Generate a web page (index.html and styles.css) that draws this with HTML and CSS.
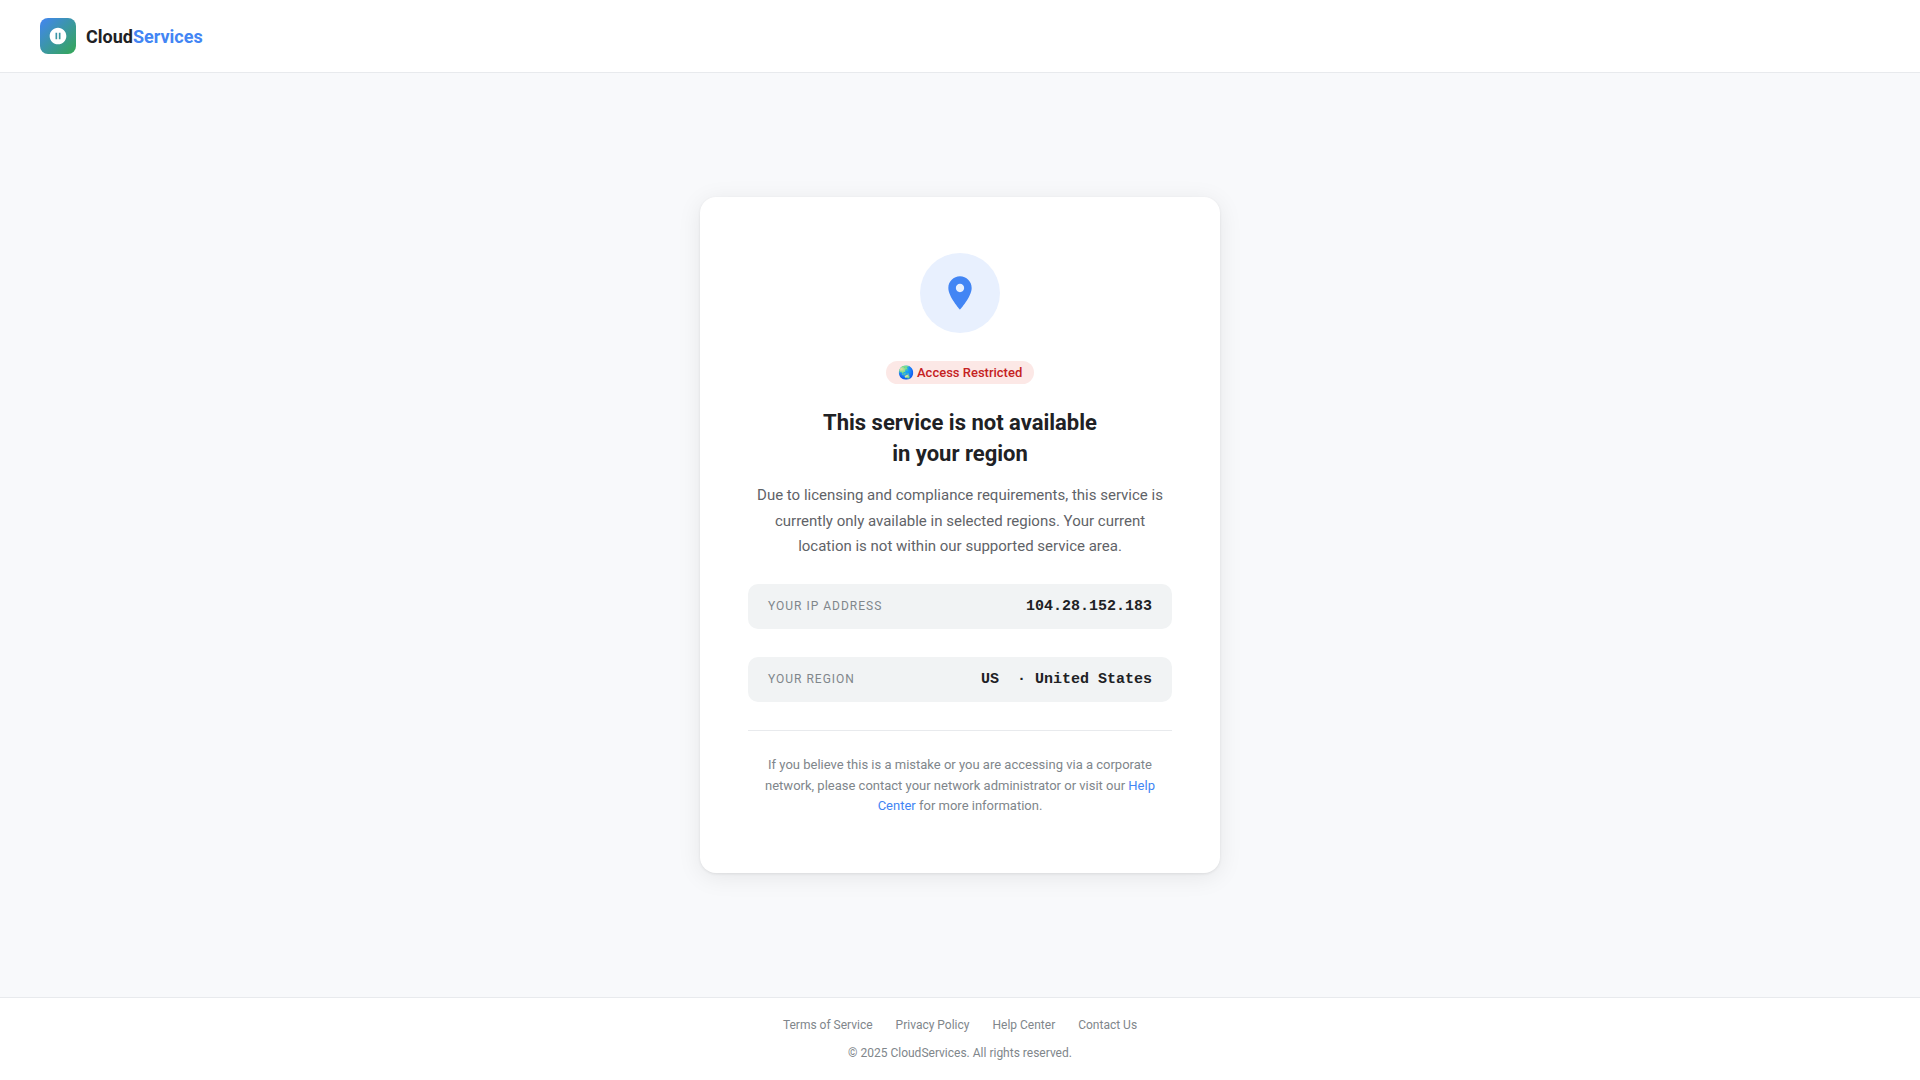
FILE: index.html
```html
<!DOCTYPE html>
<html lang="en">
<head>
    <meta charset="UTF-8">
    <meta name="viewport" content="width=device-width, initial-scale=1.0">
    <title>Service Not Available</title>
    <link rel="stylesheet" href="styles.css">
</head>
<body>
    <header class="header">
        <div class="logo-icon">
            <svg viewBox="0 0 24 24"><path d="M12 2C6.48 2 2 6.48 2 12s4.48 10 10 10 10-4.48 10-10S17.52 2 12 2zm-1 14H9V8h2v8zm4 0h-2V8h2v8z"/></svg>
        </div>
        <span class="logo-text">Cloud<span>Services</span></span>
    </header>

    <main class="main">
        <div class="card">
            <div class="icon-wrap">
                <svg viewBox="0 0 24 24"><path d="M12 2C8.13 2 5 5.13 5 9c0 5.25 7 13 7 13s7-7.75 7-13c0-3.87-3.13-7-7-7zm0 9.5c-1.38 0-2.5-1.12-2.5-2.5s1.12-2.5 2.5-2.5 2.5 1.12 2.5 2.5-1.12 2.5-2.5 2.5z"/></svg>
            </div>
            <div class="badge">🌏 Access Restricted</div>
            <h1>This service is not available<br>in your region</h1>
            <p class="desc">Due to licensing and compliance requirements, this service is currently only available in selected regions. Your current location is not within our supported service area.</p>

            <div class="info-box">
                <span class="info-label">Your IP Address</span>
                <span class="info-value">104.28.152.183</span>
            </div>
            <div class="info-box">
                <span class="info-label">Your Region</span>
                <span class="info-value">US &nbsp;· United States</span>
            </div>

            <hr class="divider">
            <p class="help-text">If you believe this is a mistake or you are accessing via a corporate network, please contact your network administrator or visit our <a href="#">Help Center</a> for more information.</p>
        </div>
    </main>

    <footer class="footer">
        <nav class="footer-links">
            <a href="#">Terms of Service</a>
            <a href="#">Privacy Policy</a>
            <a href="#">Help Center</a>
            <a href="#">Contact Us</a>
        </nav>
        <p>© 2025 CloudServices. All rights reserved.</p>
    </footer>
</body>
</html>
```

FILE: styles.css
```css
* {
    margin: 0;
    padding: 0;
    box-sizing: border-box;
}

body {
    font-family: Roboto, Arial, sans-serif;
    background: #f8f9fb;
    color: #202124;
    min-height: 100vh;
    display: flex;
    flex-direction: column;
}

.header {
    background: #fff;
    border-bottom: 1px solid #e8eaed;
    padding: 18px 40px;
    display: flex;
    align-items: center;
    gap: 10px;
}

.logo-icon {
    width: 36px;
    height: 36px;
    border-radius: 8px;
    background: linear-gradient(135deg, #4285f4, #34a853);
    display: flex;
    align-items: center;
    justify-content: center;
}

.logo-icon svg {
    width: 20px;
    height: 20px;
    fill: #fff;
}

.logo-text {
    font-size: 18px;
    font-weight: 700;
}

.logo-text span {
    color: #4285f4;
}

.main {
    flex: 1;
    display: flex;
    align-items: center;
    justify-content: center;
    padding: 40px 20px;
}

.card {
    background: #fff;
    border-radius: 16px;
    box-shadow: 0 1px 3px rgba(0, 0, 0, 0.08), 0 4px 24px rgba(0, 0, 0, 0.08);
    padding: 56px 48px;
    max-width: 520px;
    width: 100%;
    text-align: center;
}

.icon-wrap {
    width: 80px;
    height: 80px;
    border-radius: 50%;
    background: #e8f0fe;
    display: flex;
    align-items: center;
    justify-content: center;
    margin: 0 auto 28px;
}

.icon-wrap svg {
    width: 40px;
    height: 40px;
    fill: #4285f4;
}

.badge {
    display: inline-block;
    background: #fce8e6;
    color: #c5221f;
    font-size: 13px;
    font-weight: 500;
    padding: 4px 12px;
    border-radius: 20px;
    margin-bottom: 24px;
}

h1 {
    font-size: 22px;
    font-weight: 700;
    line-height: 1.4;
    margin-bottom: 14px;
}

.desc {
    font-size: 15px;
    line-height: 1.7;
    color: #5f6368;
    margin-bottom: 24px;
}

.info-box {
    background: #f1f3f4;
    border-radius: 10px;
    padding: 14px 20px;
    margin-bottom: 28px;
    display: flex;
    align-items: center;
    justify-content: space-between;
}

.info-label {
    font-size: 12px;
    color: #80868b;
    text-transform: uppercase;
    letter-spacing: 1px;
}

.info-value {
    font-family: "Liberation Mono", monospace;
    font-size: 15px;
    font-weight: 700;
}

.divider {
    border: none;
    border-top: 1px solid #e8eaed;
    margin-bottom: 24px;
}

.help-text {
    font-size: 13px;
    line-height: 1.6;
    color: #80868b;
}

.help-text a {
    color: #4285f4;
    text-decoration: none;
}

.footer {
    background: #fff;
    border-top: 1px solid #e8eaed;
    padding: 20px 40px;
    text-align: center;
    font-size: 12px;
    color: #80868b;
}

.footer-links {
    display: flex;
    justify-content: center;
    gap: 23px;
    margin-bottom: 14px;
}

.footer-links a {
    color: #80868b;
    text-decoration: none;
}
```
